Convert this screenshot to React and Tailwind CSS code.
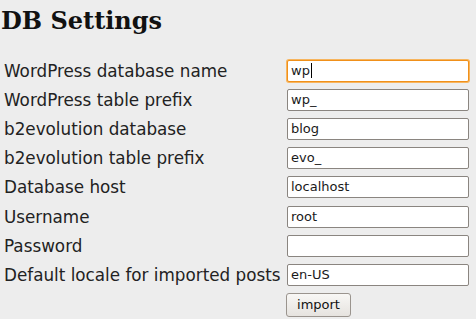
export default function App() {
  const rows = [
    ["WordPress database name", "wp", true],
    ["WordPress table prefix", "wp_"],
    ["b2evolution database", "blog"],
    ["b2evolution table prefix", "evo_"],
    ["Database host", "localhost"],
    ["Username", "root"],
    ["Password", ""],
    ["Default locale for imported posts", "en-US"],
  ];
  return (
    <div className="w-[476px] h-[319px] bg-[#ededed] overflow-hidden text-[#111]">
      <h1 className="pl-[1px] pt-[5px] h-[56px] text-[24px] font-bold leading-[32px]" style={{ fontFamily: '"DejaVu Serif", serif' }}>
        DB Settings
      </h1>
      <div className="flex flex-col pl-[4px]" style={{ fontFamily: '"DejaVu Sans", sans-serif' }}>
        {rows.map(([label, val, focus]) => (
          <div key={label} className="flex items-center h-[29.2px]">
            <div className="w-[283px] text-[16.8px] leading-[20px] text-[#222]">{label}</div>
            <div
              className={`w-[182px] h-[22px] bg-white rounded-[2px] border text-[13px] leading-[20px] pl-[3px] flex items-center text-[#1a1a1a] ${
                focus ? "border-[#f0901a] shadow-[0_0_0_1px_#f7b55e]" : "border-[#8a8580]"
              }`}
            >
              {val}
              {focus && <span className="w-[1px] h-[15px] bg-black ml-[1px]" />}
            </div>
          </div>
        ))}
        <div className="flex mt-[3px]">
          <div className="w-[282px]" />
          <div className="w-[65px] h-[24px] rounded-[3px] border border-[#9a948e] bg-gradient-to-b from-[#f8f7f5] to-[#e6e3df] text-[13px] flex items-center justify-center">
            import
          </div>
        </div>
      </div>
    </div>
  );
}
